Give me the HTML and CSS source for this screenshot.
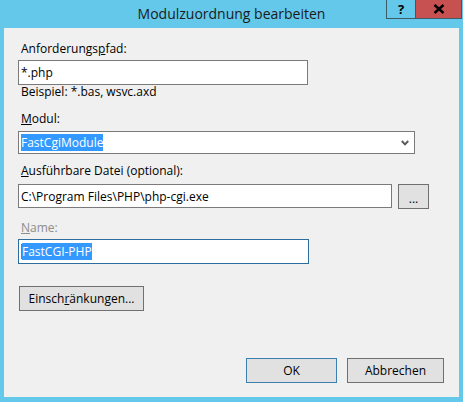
FILE: index.html
```html
<!DOCTYPE html>
<html lang="de">
<head>
  <meta charset="UTF-8">
  <title>Modulzuordnung bearbeiten</title>
  <link rel="stylesheet" href="styles.css">
</head>
<body>
  <div class="window">
    <div class="titlebar">
      <span></span>
      <span class="title">Modulzuordnung bearbeiten</span>
      <div class="caption-buttons">
        <span class="cap-btn help">?</span>
        <span class="cap-btn close">
          <svg width="12" height="10" viewBox="0 0 12 10"><path d="M1.5 1 L10.5 9 M10.5 1 L1.5 9" stroke="#000" stroke-width="2.4"/></svg>
        </span>
      </div>
    </div>
    <div class="client">
      <label class="label path-label">Anforderungs<u>p</u>fad:</label>
      <div class="textbox path">*.php</div>
      <div class="hint">Beispiel: *.bas, wsvc.axd</div>

      <label class="label module-label"><u>M</u>odul:</label>
      <div class="combo">
        <span class="sel">FastCgiModule</span>
        <svg class="chevron" width="8" height="6" viewBox="0 0 8 6"><path d="M0.8 1 L4 4.4 L7.2 1" fill="none" stroke="#5a5a5a" stroke-width="2"/></svg>
      </div>

      <label class="label exe-label"><u>A</u>usführbare Datei (optional):</label>
      <div class="row">
        <div class="textbox exe">C:\Program Files\PHP\php-cgi.exe</div>
        <button class="btn browse">...</button>
      </div>

      <label class="label name-label disabled"><u>N</u>ame:</label>
      <div class="textbox name focused"><span class="caret"></span><span class="sel">FastCGI-PHP</span></div>

      <button class="btn restrict">Einsch<u>r</u>änkungen...</button>

      <div class="footer">
        <button class="btn ok">OK</button>
        <button class="btn cancel">Abbrechen</button>
      </div>
    </div>
  </div>
</body>
</html>
```

FILE: styles.css
```css
body {
  margin: 0;
  font-family: "Open Sans", "Noto Sans", sans-serif;
  font-size: 12px;
  color: #000;
}
.window {
  width: 463px;
  height: 402px;
  box-sizing: border-box;
  background: #63c8ea;
  padding: 0 4px 5px 4px;
  display: flex;
  flex-direction: column;
}
.titlebar {
  height: 28px;
  margin: 0 -4px;
  display: grid;
  grid-template-columns: 1fr auto 1fr;
  align-items: start;
}
.title {
  font-size: 14px;
  line-height: 20px;
  padding-top: 4px;
  color: #1b1b1b;
}
.caption-buttons {
  display: flex;
  justify-content: flex-end;
  padding-right: 1px;
}
.cap-btn {
  height: 19px;
  box-sizing: border-box;
  display: flex;
  align-items: center;
  justify-content: center;
  border: 1px solid #3d5a66;
  border-top: none;
}
.help {
  width: 29px;
  font-weight: bold;
  font-size: 13px;
  border-right: none;
}
.close {
  width: 47px;
  background: #c75050;
}
.client {
  flex: 1;
  background: #f0f0f0;
  display: flex;
  flex-direction: column;
  align-items: flex-start;
  padding-left: 14px;
}
.label {
  display: block;
  line-height: 16px;
  margin-left: 3px;
}
.path-label {
  margin-top: 13px;
  margin-bottom: 3px;
}
.module-label {
  margin-top: 11px;
  margin-bottom: 4px;
}
.exe-label {
  margin-top: 9px;
  margin-bottom: 5px;
}
.name-label {
  margin-top: 11px;
  margin-bottom: 3px;
}
.disabled {
  color: #8d8d8d;
}
.textbox {
  box-sizing: border-box;
  background: #fff;
  border: 1px solid #7a7a7a;
  padding: 0 2px;
  white-space: nowrap;
  display: flex;
  align-items: center;
}
.path {
  width: 290px;
  height: 25px;
}
.hint {
  line-height: 16px;
  margin: -1px 0 0 3px;
}
.combo {
  box-sizing: border-box;
  width: 397px;
  height: 23px;
  background: #fff;
  border: 1px solid #7a7a7a;
  display: flex;
  align-items: center;
  justify-content: space-between;
  padding: 0 5px 0 2px;
}
.sel {
  background: #3399ff;
  color: #fff;
  line-height: 17px;
}
.row {
  display: flex;
  gap: 6px;
}
.exe {
  width: 374px;
  height: 24px;
}
.name {
  width: 291px;
  height: 25px;
}
.focused {
  border-color: #2e6e9e;
}
.caret {
  width: 1px;
  height: 15px;
  background: #b56f1c;
}
.btn {
  font: inherit;
  color: #000;
  background: #e1e1e1;
  border: 1px solid #707070;
  padding: 0;
  height: 25px;
  box-sizing: border-box;
}
.browse {
  width: 31px;
  padding-top: 4px;
}
.restrict {
  width: 125px;
  margin: 22px 0 0 1px;
}
.footer {
  margin-top: auto;
  margin-bottom: 14px;
  align-self: stretch;
  display: flex;
  justify-content: flex-end;
  gap: 10px;
  padding-right: 15px;
}
.ok {
  width: 91px;
  border-color: #3c7fb1;
}
.cancel {
  width: 97px;
}
```
